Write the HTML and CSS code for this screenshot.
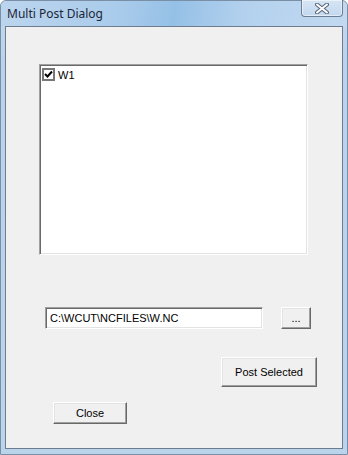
FILE: index.html
```html
<!DOCTYPE html>
<html lang="en">
<head>
    <meta charset="UTF-8">
    <title>Multi Post Dialog</title>
    <link rel="stylesheet" href="styles.css">
</head>
<body>
    <div class="window">
        <div class="titlebar">
            <span class="title">Multi Post Dialog</span>
            <span class="close-x">
                <svg width="14" height="11" viewBox="0 0 14 11">
                    <path d="M2 1.5 L12 9.5 M12 1.5 L2 9.5" stroke="#56677d" stroke-width="4" stroke-linecap="round"/>
                    <path d="M2 1.5 L12 9.5 M12 1.5 L2 9.5" stroke="#ffffff" stroke-width="2" stroke-linecap="round"/>
                </svg>
            </span>
        </div>
        <div class="client">
            <div class="listbox">
                <div class="item">
                    <span class="check">
                        <svg width="9" height="9" viewBox="0 0 9 9">
                            <path d="M1 4 L3.5 6.5 L8 1.5" fill="none" stroke="#000" stroke-width="2"/>
                        </svg>
                    </span>
                    <span>W1</span>
                </div>
            </div>
            <div class="path-row">
                <div class="textbox">C:\WCUT\NCFILES\W.NC</div>
                <button class="btn btn-browse">...</button>
            </div>
            <button class="btn btn-post">Post Selected</button>
            <button class="btn btn-close">Close</button>
        </div>
    </div>
</body>
</html>
```

FILE: styles.css
```css
* { box-sizing: border-box; }
body {
    margin: 0;
    font-family: "Liberation Sans", Arial, sans-serif;
    font-size: 11px;
    color: #000;
}
.window {
    width: 348px;
    height: 455px;
    background: linear-gradient(to bottom, #c4dbf1, #b9d3ec 60px, #bad4ec);
    border: 1px solid #7a8ea6;
    border-radius: 6px 6px 0 0;
    display: flex;
    flex-direction: column;
}
.titlebar {
    height: 25px;
    display: flex;
    align-items: flex-start;
    background: linear-gradient(100deg, #bcd5ee 0%, #a9cbeb 35%, #95c0e6 50%, #b3d1ee 70%, #c2d9f0 100%);
    border-radius: 6px 6px 0 0;
}
.title {
    font-family: "Noto Sans", "Open Sans", sans-serif;
    font-size: 12px;
    line-height: 25px;
    padding-left: 6px;
    color: #1a2636;
}
.close-x {
    margin-left: auto;
    margin-right: 4px;
    margin-top: -1px;
    width: 42px;
    height: 17px;
    border: 1px solid #6c7e94;
    border-top: none;
    border-radius: 0 0 4px 4px;
    background: linear-gradient(to bottom, #d6e5f4, #c3d8ee);
    box-shadow: inset 0 0 0 1px rgba(255,255,255,0.5);
    display: flex;
    justify-content: center;
    align-items: center;
}
.client {
    margin: 0 4px;
    height: 423px;
    background: #f0f0f0;
    border: 1px solid #6d7d8f;
    display: flex;
    flex-direction: column;
    align-items: flex-start;
}
.listbox {
    margin: 37px 0 0 33px;
    width: 269px;
    height: 191px;
    background: #fff;
    border: 1px solid;
    border-color: #a0a0a0 #fff #fff #a0a0a0;
    box-shadow: inset 1px 1px #696969, inset -1px -1px #e3e3e3;
    padding: 3px 2px;
}
.item {
    display: flex;
    align-items: center;
    gap: 3px;
    height: 13px;
}
.check {
    width: 13px;
    height: 13px;
    background: #fff;
    border: 2px solid #777;
    display: flex;
    justify-content: center;
    align-items: center;
}
.path-row {
    margin: 52px 0 0 39px;
    display: flex;
    gap: 18px;
}
.textbox {
    width: 218px;
    height: 22px;
    background: #fff;
    border: 1px solid;
    border-color: #a0a0a0 #fff #fff #a0a0a0;
    box-shadow: inset 1px 1px #696969, inset -1px -1px #e3e3e3;
    padding: 4px 4px;
    line-height: 13px;
}
.btn {
    font-family: "Liberation Sans", Arial, sans-serif;
    font-size: 11px;
    color: #000;
    background: #f0f0f0;
    border: 1px solid;
    border-color: #fff #696969 #696969 #fff;
    box-shadow: inset -1px -1px #a0a0a0, inset 1px 1px #e3e3e3;
    padding: 0;
}
.btn-browse {
    width: 30px;
    height: 22px;
}
.btn-post {
    margin: 28px 0 0 215px;
    width: 96px;
    height: 30px;
}
.btn-close {
    margin: 15px 0 0 47px;
    width: 74px;
    height: 22px;
}
```
